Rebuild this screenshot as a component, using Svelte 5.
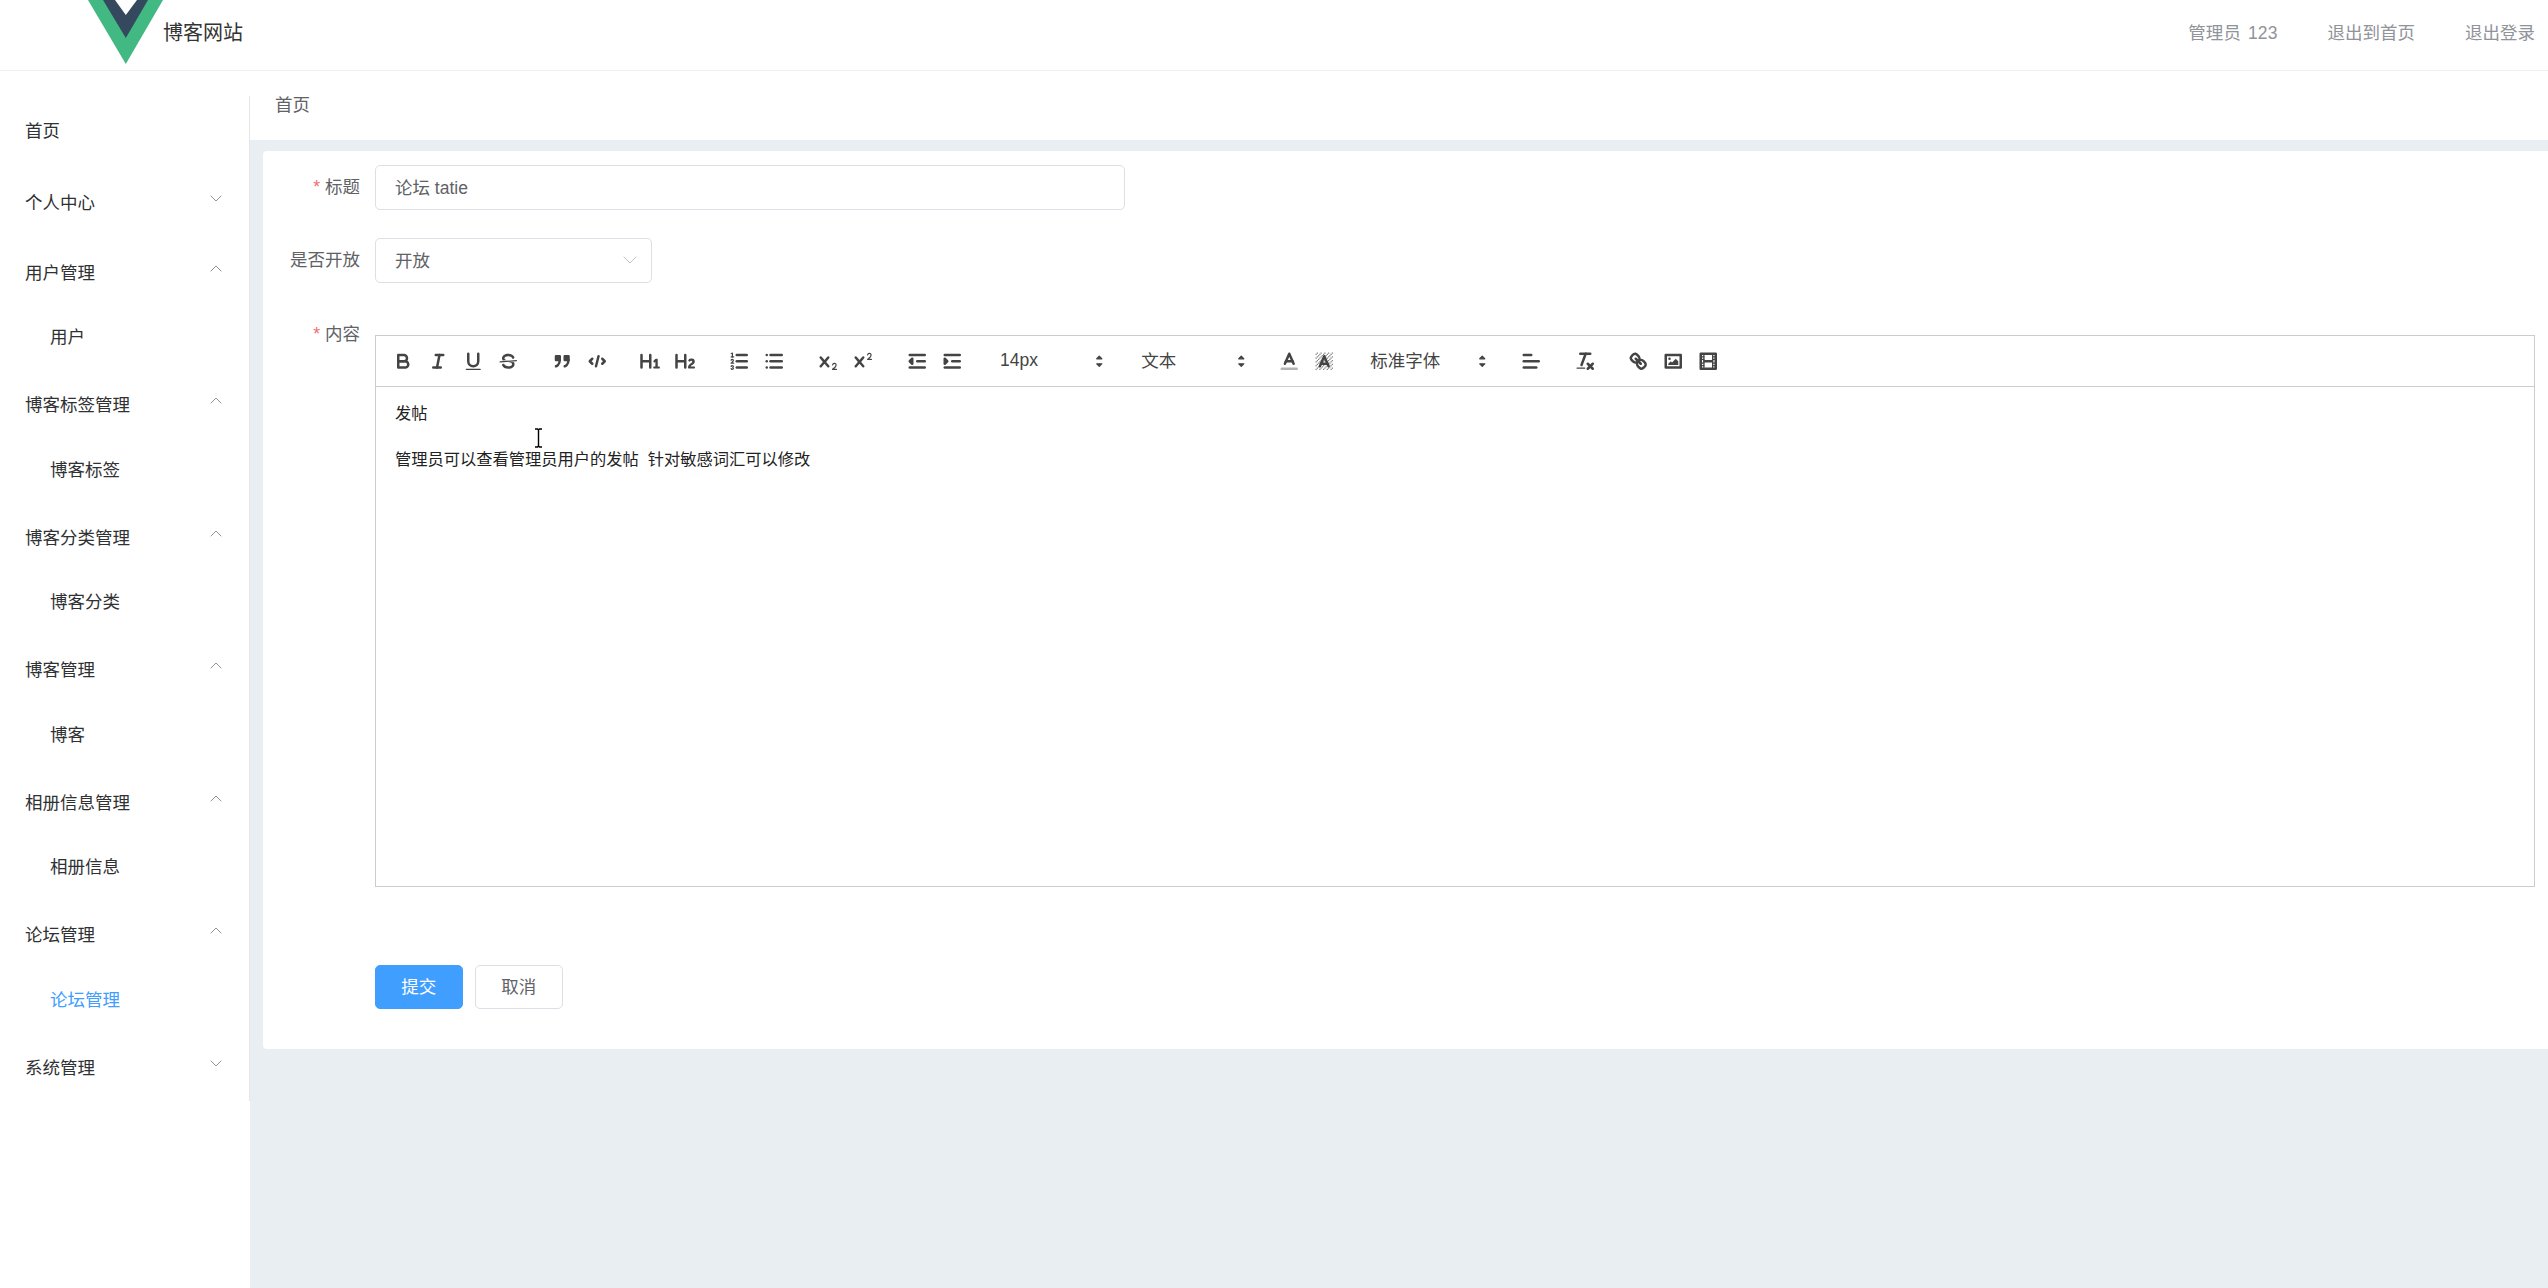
<script>
  const menu = [
    { title: '首页', first: true },
    { title: '个人中心', arrow: 'down' },
    { title: '用户管理', arrow: 'up', child: '用户' },
    { title: '博客标签管理', arrow: 'up', child: '博客标签' },
    { title: '博客分类管理', arrow: 'up', child: '博客分类' },
    { title: '博客管理', arrow: 'up', child: '博客' },
    { title: '相册信息管理', arrow: 'up', child: '相册信息' },
    { title: '论坛管理', arrow: 'up', child: '论坛管理', active: true },
    { title: '系统管理', arrow: 'down' }
  ];

  const ln = (a, b, c, d, cls = '') => `<line class="${cls}" x1="${a}" x2="${b}" y1="${c}" y2="${d}"/>`;
  const rc = (x, y, w, h, cls = 'f') => `<rect class="${cls}" x="${x}" y="${y}" width="${w}" height="${h}"/>`;

  let hatch = '';
  for (let x = 2; x < 16; x++) for (let y = 2; y < 16; y++) if ((x + y) % 3 === 2) hatch += rc(x, y, 1, 1);

  const ic = {
    bold: '<path d="M5,4H9.5A2.5,2.5,0,0,1,12,6.5v0A2.5,2.5,0,0,1,9.5,9H5A0,0,0,0,1,5,9V4A0,0,0,0,1,5,4Z"/><path d="M5,9h5.5A2.5,2.5,0,0,1,13,11.5v0A2.5,2.5,0,0,1,10.5,14H5a0,0,0,0,1,0,0V9A0,0,0,0,1,5,9Z"/>',
    italic: ln(7, 13, 4, 4) + ln(5, 11, 14, 14) + ln(8, 10, 14, 4),
    underline: '<path d="M5,3V9a4.012,4.012,0,0,0,4,4H9a4.012,4.012,0,0,0,4-4V3"/><rect class="f" height="1" rx="0.5" ry="0.5" width="12" x="3" y="15"/>',
    strike: '<line class="t" x1="15.5" x2="2.5" y1="8.5" y2="9.5"/><path class="f" d="M9.007,8C6.542,7.791,6,7.519,6,6.5,6,5.792,7.283,5,9,5c1.571,0,2.765.679,2.969,1.309a1,1,0,0,0,1.9-.617C13.356,4.106,11.354,3,9,3,6.2,3,4,4.538,4,6.5a3.2,3.2,0,0,0,.5,1.843Z"/><path class="f" d="M8.984,10C11.457,10.208,12,10.479,12,11.5c0,.708-1.283,1.5-3,1.5-1.571,0-2.765-.679-2.969-1.309a1,1,0,1,0-1.9.617C4.644,13.894,6.646,15,9,15c2.8,0,5-1.538,5-3.5a3.2,3.2,0,0,0-.5-1.843Z"/>',
    quote: '<rect class="fs" height="3" width="3" x="4" y="5"/><rect class="fs" height="3" width="3" x="11" y="5"/><path d="M7,8c0,4.031-3,5-3,5"/><path d="M14,8c0,4.031-3,5-3,5"/>',
    code: '<polyline points="5 7 3 9 5 11"/><polyline points="13 7 15 9 13 11"/>' + ln(10, 8, 5, 13),
    h1: '<path class="f" d="M10,4V14a1,1,0,0,1-2,0V10H3v4a1,1,0,0,1-2,0V4A1,1,0,0,1,3,4V8H8V4a1,1,0,0,1,2,0Zm6.06787,9.209H14.98975V7.59863a.54085.54085,0,0,0-.605-.60547h-.62744a1.01119,1.01119,0,0,0-.748.29688L11.645,8.56641a.5435.5435,0,0,0-.022.8584l.28613.30762a.53861.53861,0,0,0,.84717.0332l.09912-.08789a1.2137,1.2137,0,0,0,.2417-.35254h.02246s-.01123.30859-.01123.60547V13.209H12.041a.54085.54085,0,0,0-.605.60547v.43945a.54085.54085,0,0,0,.605.60547h4.02686a.54085.54085,0,0,0,.605-.60547v-.43945A.54085.54085,0,0,0,16.06787,13.209Z"/>',
    h2: '<path class="f" d="M16.73975,13.81445v.43945a.54085.54085,0,0,1-.605.60547H11.855a.58392.58392,0,0,1-.64893-.60547V14.0127c0-2.90527,3.39941-3.42187,3.39941-4.55469a.77675.77675,0,0,0-.84717-.78125,1.17684,1.17684,0,0,0-.83594.38477c-.2749.26367-.561.374-.85791.13184l-.4292-.34082c-.30811-.24219-.38525-.51758-.1543-.81445a2.97155,2.97155,0,0,1,2.45361-1.17676,2.45393,2.45393,0,0,1,2.68408,2.40918c0,2.45312-3.1792,2.92676-3.27832,3.93848h2.79443A.54085.54085,0,0,1,16.73975,13.81445ZM9,3A.99974.99974,0,0,0,8,4V8H3V4A1,1,0,0,0,1,4V14a1,1,0,0,0,2,0V10H8v4a1,1,0,0,0,2,0V4A.99974.99974,0,0,0,9,3Z"/>',
    ol: ln(7, 15, 4, 4) + ln(7, 15, 9, 9) + ln(7, 15, 14, 14) + ln(2.5, 4.5, 5.5, 5.5, 't') + '<path class="f" d="M3.5,6A0.5,0.5,0,0,1,3,5.5V3.085l-0.276.138A0.5,0.5,0,0,1,2.053,3c-0.124-.247-0.023-0.324.224-0.447l1-.5A0.5,0.5,0,0,1,4,2.5v3A0.5,0.5,0,0,1,3.5,6Z"/><path class="t" d="M4.5,10.5h-2c0-.234,1.85-1.076,1.85-2.234A0.959,0.959,0,0,0,2.5,8.156"/><path class="t" d="M2.5,14.846a0.959,0.959,0,0,0,1.85-.109A0.7,0.7,0,0,0,3.75,14a0.688,0.688,0,0,0,.6-0.736,0.959,0.959,0,0,0-1.85-.109"/>',
    ul: ln(6, 15, 4, 4) + ln(6, 15, 9, 9) + ln(6, 15, 14, 14) + ln(3, 3, 4, 4) + ln(3, 3, 9, 9) + ln(3, 3, 14, 14),
    sub: '<path class="f" d="M15.5,15H13.861a3.858,3.858,0,0,0,1.914-2.975,1.8,1.8,0,0,0-1.6-1.751A1.921,1.921,0,0,0,12.021,11.7a0.50013,0.50013,0,1,0,.957.291h0a0.914,0.914,0,0,1,1.053-.725,0.81,0.81,0,0,1,.744.762c0,1.076-1.16971,1.86982-1.93971,2.43082A1.45639,1.45639,0,0,0,12,15.5a0.5,0.5,0,0,0,.5.5h3A0.5,0.5,0,0,0,15.5,15Z"/><path class="f" d="M9.65,5.241a1,1,0,0,0-1.409.108L6,7.964,3.759,5.349A1,1,0,0,0,2.192,6.59178Q2.21541,6.6213,2.241,6.649L4.684,9.5,2.241,12.35A1,1,0,0,0,3.71,13.70722q0.02557-.02768.049-0.05722L6,11.036,8.241,13.65a1,1,0,1,0,1.567-1.24277Q9.78459,12.3777,9.759,12.35L7.316,9.5,9.759,6.651A1,1,0,0,0,9.65,5.241Z"/>',
    sup: '<path class="f" d="M15.5,7H13.861a4.015,4.015,0,0,0,1.914-2.975,1.8,1.8,0,0,0-1.6-1.751A1.922,1.922,0,0,0,12.021,3.7a0.5,0.5,0,1,0,.957.291,0.917,0.917,0,0,1,1.053-.725,0.81,0.81,0,0,1,.744.762c0,1.077-1.164,1.925-1.934,2.486A1.423,1.423,0,0,0,12,7.5a0.5,0.5,0,0,0,.5.5h3A0.5,0.5,0,0,0,15.5,7Z"/><path class="f" d="M9.651,5.241a1,1,0,0,0-1.41.108L6,7.964,3.759,5.349a1,1,0,1,0-1.519,1.3L4.683,9.5,2.241,12.35a1,1,0,1,0,1.519,1.3L6,11.036l2.241,2.616a1,1,0,0,0,1.519-1.3L7.317,9.5,9.759,6.651A1,1,0,0,0,9.651,5.241Z"/>',
    outdent: ln(3, 15, 14, 14) + ln(3, 15, 4, 4) + ln(9, 15, 9, 9) + '<polyline class="fs" points="5 7 5 11 3 9 5 7"/>',
    indent: ln(3, 15, 14, 14) + ln(3, 15, 4, 4) + ln(9, 15, 9, 9) + '<polyline class="fs" points="3 7 3 11 5 9 3 7"/>',
    color: '<line class="o" x1="3" x2="15" y1="15" y2="15"/><polyline points="5.5 11 9 3 12.5 11"/>' + ln(11.63, 6.38, 9, 9),
    background: `<g class="h">${hatch}</g><polyline points="5.5 13 9 5 12.5 13"/>` + ln(11.63, 6.38, 11, 11),
    align: ln(3, 15, 9, 9) + ln(3, 13, 14, 14) + ln(3, 9, 4, 4),
    clean: ln(5, 13, 3, 3) + ln(6, 9.35, 12, 3) + ln(11, 15, 11, 15) + ln(15, 11, 11, 15) + '<rect class="f" height="1" rx="0.5" ry="0.5" width="7" x="2" y="14"/>',
    link: ln(7, 11, 7, 11) + '<path d="M8.9,4.577a3.476,3.476,0,0,1,.36,4.679A3.476,3.476,0,0,1,4.577,8.9C3.185,7.5,2.035,6.4,4.217,4.217S7.5,3.185,8.9,4.577Z"/><path d="M13.423,9.1a3.476,3.476,0,0,0-4.679-.36,3.476,3.476,0,0,0,.36,4.679c1.392,1.392,2.5,2.542,4.679.36S14.815,10.5,13.423,9.1Z"/>',
    image: '<rect height="10" width="12" x="3" y="4"/><circle class="f" cx="6" cy="7" r="1"/><polyline class="f" points="5 12 5 11 7 9 8 10 11 7 13 9 13 12 5 12"/>',
    video: '<rect height="12" width="12" x="3" y="3"/>' + rc(5, 3, 1, 12) + rc(12, 3, 1, 12) + rc(5, 8, 8, 2) + rc(3, 5, 3, 1) + rc(3, 7, 3, 1) + rc(3, 10, 3, 1) + rc(3, 12, 3, 1) + rc(12, 5, 3, 1) + rc(12, 7, 3, 1) + rc(12, 10, 3, 1) + rc(12, 12, 3, 1)
  };

  const arrows = '<polygon points="7 11 9 13 11 11 7 11"/><polygon points="7 7 9 5 11 7 7 7"/>';

  const toolbar = [
    [{ i: 'bold' }, { i: 'italic' }, { i: 'underline' }, { i: 'strike' }],
    [{ i: 'quote' }, { i: 'code' }],
    [{ i: 'h1' }, { i: 'h2' }],
    [{ i: 'ol' }, { i: 'ul' }],
    [{ i: 'sub' }, { i: 'sup' }],
    [{ i: 'outdent' }, { i: 'indent' }],
    [{ p: '14px', w: 'pw-size' }],
    [{ p: '文本', w: 'pw-head' }],
    [{ i: 'color' }, { i: 'background' }],
    [{ p: '标准字体', w: 'pw-font' }],
    [{ i: 'align' }],
    [{ i: 'clean' }],
    [{ i: 'link' }, { i: 'image' }, { i: 'video' }]
  ];
</script>

<div class="page">
  <header class="topbar">
    <div class="brand">
      <svg class="logo" viewBox="0 0 75 64" aria-hidden="true">
        <polygon points="0,0 75,0 37.8,64" fill="#42b883" />
        <polygon points="15,0 60,0 37.8,38" fill="#35495e" />
        <polygon points="27,0 49,0 37.8,15" fill="#fff" />
      </svg>
      <span class="brand-name">博客网站</span>
    </div>
    <nav class="top-links">
      <span class="user">管理员 123</span>
      <span>退出到首页</span>
      <span>退出登录</span>
    </nav>
  </header>

  <div class="body">
    <aside class="aside">
      <ul class="menu">
        {#each menu as m}
          <li class="menu-title" class:first={m.first}>
            <span>{m.title}</span>
            {#if m.arrow}
              <svg class="chev" class:up={m.arrow === 'up'} viewBox="0 0 12 7" aria-hidden="true">
                <polyline points="0.7,0.7 6,6 11.3,0.7" />
              </svg>
            {/if}
          </li>
          {#if m.child}
            <li class="menu-child" class:active={m.active}>{m.child}</li>
          {/if}
        {/each}
      </ul>
    </aside>

    <main class="main">
      <div class="crumb">首页</div>
      <section class="card">
        <div class="row row-title">
          <span class="label"><i>*</i> 标题</span>
          <div class="field input">论坛 tatie</div>
        </div>
        <div class="row row-open">
          <span class="label">是否开放</span>
          <div class="field select">
            <span>开放</span>
            <svg class="sel-chev" viewBox="0 0 14 8" aria-hidden="true"><polyline points="0.7,0.7 7,7 13.3,0.7" /></svg>
          </div>
        </div>
        <div class="row row-editor">
          <span class="label"><i>*</i> 内容</span>
          <div class="editor">
            <div class="toolbar">
              {#each toolbar as group}
                <div class="group">
                  {#each group as t}
                    {#if t.i}
                      <span class="btn"><svg class="ic" viewBox="0 0 18 18" aria-hidden="true">{@html ic[t.i]}</svg></span>
                    {:else}
                      <span class="picker {t.w}">
                        <span>{t.p}</span>
                        <svg class="ic pick-ic" viewBox="0 0 18 18" aria-hidden="true">{@html arrows}</svg>
                      </span>
                    {/if}
                  {/each}
                </div>
              {/each}
            </div>
            <div class="text">
              <p>发帖</p>
              <p><br /></p>
              <p>管理员可以查看管理员用户的发帖&nbsp;&nbsp;针对敏感词汇可以修改</p>
              <svg class="cursor" viewBox="0 0 9 20" aria-hidden="true">
                <path d="M1,1H3.5L4.5,2L5.5,1H8M4.5,2V18M1,19H3.5L4.5,18L5.5,19H8" />
              </svg>
            </div>
          </div>
        </div>
        <div class="actions">
          <button class="b primary">提交</button>
          <button class="b">取消</button>
        </div>
      </section>
    </main>
  </div>
</div>

<style>
  :global(body) { margin: 0; background: #fff; }
  .page {
    width: 2548px;
    height: 1288px;
    overflow: hidden;
    display: flex;
    flex-direction: column;
    font-family: "Liberation Sans", "Noto Sans CJK SC", sans-serif;
    font-size: 17.5px;
  }
  .topbar {
    height: 70px;
    flex: none;
    box-sizing: content-box;
    border-bottom: 1px solid #eeeeee;
    display: flex;
    justify-content: space-between;
    align-items: center;
    padding: 0 13px 0 88px;
    background: #fff;
  }
  .brand { display: flex; align-items: flex-start; height: 70px; }
  .logo { width: 75px; height: 64px; display: block; }
  .brand-name { font-size: 20px; color: #333; line-height: 67px; }
  .top-links { display: flex; gap: 50px; color: #909399; padding-bottom: 8px; }
  .user { word-spacing: 2px; letter-spacing: 0.1px; }
  .body { flex: 1; display: flex; min-height: 0; }
  .aside { width: 250px; flex: none; background: #fff; padding-top: 25px; box-sizing: border-box; }
  .menu {
    list-style: none;
    margin: 0;
    padding: 0;
    border-right: 1px solid #e6e6e6;
    color: #303133;
  }
  .menu-title {
    height: 70px;
    box-sizing: border-box;
    display: flex;
    align-items: center;
    justify-content: space-between;
    padding: 0 25px;
  }
  .menu-title.first { padding-bottom: 3px; }
  .chev { width: 12px; height: 7px; position: relative; top: -3px; margin-right: 2px; fill: none; stroke: #909399; stroke-width: 1; }
  .chev.up { transform: rotate(180deg); }
  .menu-child { height: 62.5px; box-sizing: border-box; display: flex; align-items: center; padding: 0 0 3px 50px; }
  .menu-child.active { color: #409eff; }
  .main { flex: 1; min-width: 0; background: #e9eef3; }
  .crumb {
    height: 69px;
    box-sizing: border-box;
    background: #fff;
    color: #606266;
    display: flex;
    align-items: center;
    padding: 0 0 5px 25px;
  }
  .card {
    margin: 11px 0 0 13px;
    height: 898px;
    box-sizing: border-box;
    background: #fff;
    border-radius: 4px 0 0 4px;
    padding-top: 14px;
  }
  .row { display: flex; align-items: flex-start; }
  .row-open { margin-top: 28px; }
  .row-editor { margin-top: 29px; }
  .label {
    width: 112px;
    flex: none;
    box-sizing: border-box;
    padding-right: 15px;
    text-align: right;
    line-height: 45px;
    color: #606266;
  }
  .label i { color: #f56c6c; font-style: normal; }
  .field {
    height: 45px;
    box-sizing: border-box;
    border: 1px solid #dcdfe6;
    border-radius: 5px;
    padding: 0 19px 2px;
    display: flex;
    align-items: center;
    color: #606266;
  }
  .input { width: 750px; }
  .select { width: 277px; justify-content: space-between; padding-right: 14px; }
  .sel-chev { width: 14px; height: 8px; fill: none; stroke: #c0c4cc; stroke-width: 1; }
  .editor { width: 2160px; margin-top: 23px; border: 1px solid #ccc; box-sizing: border-box; height: 552px; }
  .toolbar {
    height: 51px;
    box-sizing: border-box;
    border-bottom: 1px solid #ccc;
    padding-left: 9.5px;
    display: flex;
    align-items: center;
    gap: 18.75px;
    color: #444;
  }
  .group { display: flex; align-items: center; }
  .btn { width: 35px; height: 30px; display: flex; align-items: center; justify-content: center; }
  .ic {
    width: 22.5px;
    height: 22.5px;
    fill: none;
    stroke: #444;
    stroke-width: 2;
    stroke-linecap: round;
    stroke-linejoin: round;
  }
  .ic :global(.f) { fill: #444; stroke: none; }
  .ic :global(.fs) { fill: #444; }
  .ic :global(.t) { stroke-width: 1; }
  .ic :global(.o) { opacity: 0.4; }
  .ic :global(.h) { opacity: 0.65; }
  .picker {
    height: 30px;
    display: flex;
    align-items: center;
    justify-content: space-between;
    box-sizing: border-box;
    padding-bottom: 2px;
  }
  .pw-size { width: 123.5px; padding-left: 12px; }
  .pw-head { width: 123px; padding: 0 0 4px 11px; }
  .pw-font { width: 134px; padding: 0 0 4px 9.5px; }
  .pick-ic { fill: #444; stroke-width: 1; margin-right: 1px; position: relative; top: 1px; }
  .pw-head .pick-ic, .pw-font .pick-ic { top: 2px; }
  .text {
    position: relative;
    padding: 15px 19px;
    font-size: 16.25px;
    line-height: 23px;
    color: #222;
  }
  .text p { margin: 0; }
  .cursor {
    position: absolute;
    left: 158px;
    top: 41px;
    width: 9px;
    height: 20px;
    fill: none;
    stroke: #000;
    stroke-width: 1.4;
  }
  .actions { display: flex; gap: 12.5px; margin: 78px 0 0 112px; }
  .b {
    width: 87.5px;
    height: 44px;
    border: 1px solid #dcdfe6;
    border-radius: 5px;
    background: #fff;
    color: #606266;
    font: inherit;
    padding: 0 0 3px;
  }
  .b.primary { background: #409eff; border-color: #409eff; color: #fff; }
</style>
